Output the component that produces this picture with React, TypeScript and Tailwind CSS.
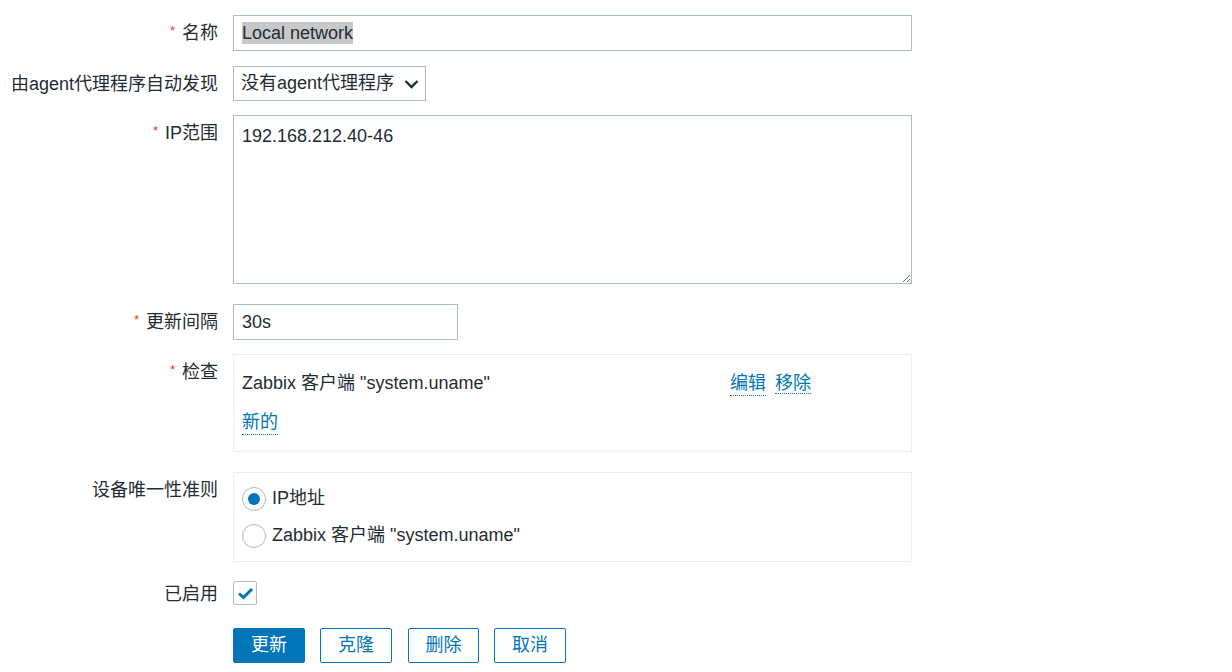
import { useState } from "react";

const font = { fontFamily: '"Liberation Sans", Arial, "Noto Sans CJK SC", sans-serif' };

// label column, right aligned, with optional red asterisk
function Label({ text, required, flat }: { text: string; required?: boolean; flat?: boolean }) {
  return (
    <div className={`w-[218px] shrink-0 text-right leading-[24px] ${flat ? "pt-[1px]" : "pt-[6px]"}`}>
      {required && <span className="text-[#e33734] text-[13px] align-top mr-[7px] relative top-[-2px]">*</span>}
      {text}
    </div>
  );
}

function Row({ label, required, flat, mb, children }: { label: string; required?: boolean; flat?: boolean; mb: string; children: React.ReactNode }) {
  return (
    <div className={`flex ${mb}`}>
      <Label text={label} required={required} flat={flat} />
      <div className="ml-[15px] flex-1">{children}</div>
    </div>
  );
}

function LinkText({ children }: { children: React.ReactNode }) {
  return (
    <span className="text-[#0275b8] border-b border-dotted border-[#0275b8] leading-[23px] cursor-pointer">
      {children}
    </span>
  );
}

function Radio({ checked, label }: { checked?: boolean; label: string }) {
  return (
    <div className="flex items-center h-[37px]">
      <span className="w-[24px] h-[24px] rounded-full border border-[#acbbc2] bg-white flex items-center justify-center">
        {checked && <span className="w-[12px] h-[12px] rounded-full bg-[#0275b8]" />}
      </span>
      <span className="ml-[6px]">{label}</span>
    </div>
  );
}

export default function App() {
  const [range, setRange] = useState("192.168.212.40-46");
  const [interval, setInterval] = useState("30s");

  return (
    <div className="w-[1232px] h-[672px] bg-white text-[18px] text-[#1f2c33] pt-[15px] overflow-hidden" style={font}>
      <Row label="名称" required mb="mb-[15px]">
        <div className="w-[679px] h-[36px] border border-[#acbbc2] flex items-center pl-[8px]">
          <span className="bg-[#c8c8c8] leading-[22px]">Local network</span>
        </div>
      </Row>

      <Row label="由agent代理程序自动发现" mb="mb-[14px]">
        <div className="w-[193px] h-[35px] border border-[#acbbc2] flex items-center justify-between pl-[7px] pr-[6px]">
          <span>没有agent代理程序</span>
          <svg width="15" height="10" viewBox="0 0 15 10" fill="none" stroke="#1f2c33" strokeWidth="2.4">
            <path d="M1.5 2 L7.5 8 L13.5 2" />
          </svg>
        </div>
      </Row>

      <Row label="IP范围" required mb="mb-[20px]">
        <textarea
          value={range}
          onChange={(e) => setRange(e.target.value)}
          className="block w-[679px] h-[169px] border border-[#acbbc2] px-[8px] pt-[7px] outline-none resize"
          style={font}
        />
      </Row>

      <Row label="更新间隔" required mb="mb-[14px]">
        <input
          value={interval}
          onChange={(e) => setInterval(e.target.value)}
          className="block w-[225px] h-[36px] border border-[#acbbc2] px-[8px] outline-none"
          style={font}
        />
      </Row>

      <Row label="检查" required mb="mb-[20px]">
        <div className="w-[679px] border border-[#ebeef0] px-[8px] py-[9px]">
          <div className="flex items-center h-[39px]">
            <span className="w-[488px]">Zabbix 客户端 "system.uname"</span>
            <LinkText>编辑</LinkText>
            <span className="ml-[9px]">
              <LinkText>移除</LinkText>
            </span>
          </div>
          <div className="flex items-center h-[39px]">
            <LinkText>新的</LinkText>
          </div>
        </div>
      </Row>

      <Row label="设备唯一性准则" mb="mb-[19px]">
        <div className="w-[679px] border border-[#ebeef0] px-[8px] py-[7px]">
          <Radio checked label="IP地址" />
          <Radio label={'Zabbix 客户端 "system.uname"'} />
        </div>
      </Row>

      <Row label="已启用" flat mb="mb-[22px]">
        <div className="w-[24px] h-[24px] border border-[#acbbc2] rounded-[2px] flex items-center justify-center">
          <svg width="17" height="14" viewBox="0 0 17 14" fill="none" stroke="#0275b8" strokeWidth="3">
            <path d="M2 7.5 L6.5 11.5 L15 3" />
          </svg>
        </div>
      </Row>

      <div className="flex">
        <div className="w-[218px] shrink-0" />
        <div className="ml-[15px] flex">
          <button className="w-[72px] h-[35px] bg-[#0275b8] text-white rounded-[2px] border border-[#0275b8]">更新</button>
          <button className="ml-[15px] w-[72px] h-[35px] bg-white text-[#0275b8] rounded-[2px] border border-[#0275b8]">克隆</button>
          <button className="ml-[16px] w-[71px] h-[35px] bg-white text-[#0275b8] rounded-[2px] border border-[#0275b8]">删除</button>
          <button className="ml-[15px] w-[72px] h-[35px] bg-white text-[#0275b8] rounded-[2px] border border-[#0275b8]">取消</button>
        </div>
      </div>
    </div>
  );
}
